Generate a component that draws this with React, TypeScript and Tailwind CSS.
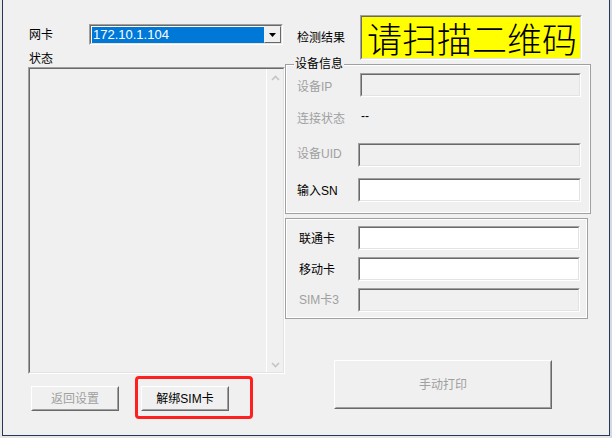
import React from "react";

function Field({ className, white }: { className: string; white?: boolean }) {
  return (
    <div className={`${className} border border-t-[#a0a0a0] border-l-[#a0a0a0] border-r-white border-b-white`}>
      <div
        className={`h-full w-full border border-t-[#696969] border-l-[#696969] border-r-[#e3e3e3] border-b-[#e3e3e3] ${
          white ? "bg-white" : "bg-[#f0f0f0]"
        }`}
      />
    </div>
  );
}

function Btn({ className, disabled, children }: { className: string; disabled?: boolean; children: React.ReactNode }) {
  return (
    <div className={`${className} border border-t-white border-l-white border-r-[#696969] border-b-[#696969] bg-[#f0f0f0]`}>
      <div
        className={`h-full w-full border border-t-[#f0f0f0] border-l-[#f0f0f0] border-r-[#a0a0a0] border-b-[#a0a0a0] flex items-center justify-center ${
          disabled ? "text-[#a0a0a0]" : "text-black"
        }`}
      >
        {children}
      </div>
    </div>
  );
}

function Row({
  label,
  gray,
  labelW,
  fieldW,
  white,
  className,
  labelShift,
}: {
  label: string;
  gray?: boolean;
  labelW: string;
  fieldW: string;
  white?: boolean;
  className?: string;
  labelShift?: string;
}) {
  return (
    <div className={`flex items-center h-[24px] ${className ?? ""}`}>
      <span className={`${labelW} ${labelShift ?? ""} leading-[14px] ${gray ? "text-[#a0a0a0]" : "text-black"}`}>
        {label}
      </span>
      <Field className={`${fieldW} h-[24px]`} white={white} />
    </div>
  );
}

export default function App() {
  return (
    <div className="relative w-[612px] h-[438px] overflow-hidden bg-[#e6e6e6] flex font-['Liberation_Sans','Noto_Sans_CJK_SC',sans-serif] text-[12px] text-black">
      <div className="w-[2px] h-full bg-[#e8e8e8]" />
      <div className="w-[608px] h-[436px] border-l border-r border-b border-[#22395a] bg-[#f0f0f0] flex">
        {/* left column */}
        <div className="ml-[25px] w-[257px] flex flex-col">
          <div className="mt-[24px] h-[21px] flex items-center">
            <span className="pl-[1px] w-[61px] pt-[1px] leading-[14px]">网卡</span>
            <div className="w-[194px] h-[21px] border border-t-[#a0a0a0] border-l-[#a0a0a0] border-r-white border-b-white">
              <div className="h-full w-full border border-t-[#696969] border-l-[#696969] border-r-[#e3e3e3] border-b-[#e3e3e3] bg-white flex pl-[1px] pt-[1px]">
                <div className="w-[172px] h-full bg-[#0078d7] text-white text-[13px] leading-[16px] pl-[1px]">
                  172.10.1.104
                </div>
                <div className="w-[17px] h-[17px] -mt-[1px] border border-t-[#f0f0f0] border-l-[#f0f0f0] border-r-[#696969] border-b-[#696969] bg-[#f0f0f0] flex items-center justify-center">
                  <svg width="7" height="4" viewBox="0 0 7 4">
                    <path d="M0 0H7L3.5 4Z" fill="#000" />
                  </svg>
                </div>
              </div>
            </div>
          </div>
          <div className="mt-[6px] h-[16px] leading-[16px] pl-[1px]">状态</div>
          <div className="w-[257px] h-[307px] border border-t-[#a0a0a0] border-l-[#a0a0a0] border-r-white border-b-white">
            <div className="h-full w-full border border-t-[#696969] border-l-[#696969] border-r-[#e3e3e3] border-b-[#e3e3e3] flex">
              <div className="flex-1" />
              <div className="w-[17px] h-full border-l border-white flex flex-col items-center justify-between pt-[6px] pb-[4px]">
                <svg width="9" height="6" viewBox="0 0 9 6">
                  <path d="M1 5L4.5 1.5L8 5" fill="none" stroke="#c4c4c4" strokeWidth="1.6" />
                </svg>
                <svg width="9" height="6" viewBox="0 0 9 6">
                  <path d="M1 1L4.5 4.5L8 1" fill="none" stroke="#c4c4c4" strokeWidth="1.6" />
                </svg>
              </div>
            </div>
          </div>
          <div className="mt-[12px] flex gap-[22px] pl-[3px]">
            <Btn className="w-[88px] h-[25px]" disabled>
              返回设置
            </Btn>
            <Btn className="w-[88px] h-[25px]">解绑SIM卡</Btn>
          </div>
        </div>

        {/* right column */}
        <div className="w-[306px] flex flex-col">
          <div className="mt-[15px] h-[45px] flex items-center">
            <span className="pl-[12px] w-[75px] pt-[1px] leading-[14px]">检测结果</span>
            <div className="w-[222px] h-[45px] border border-t-[#a0a0a0] border-l-[#a0a0a0] border-r-white border-b-white">
              <div className="h-full w-full border border-t-[#696969] border-l-[#696969] border-r-[#e3e3e3] border-b-[#e3e3e3] bg-[#ffff00] flex items-center pl-[5px] text-[35px] leading-[40px] font-['Noto_Sans_CJK_SC',sans-serif] font-light">
                请扫描二维码
              </div>
            </div>
          </div>

          <div className="relative mt-[4px] w-[306px] h-[150px] border border-[#a0a0a0]">
            <div className="h-full w-full border border-white pl-[10px] pt-[7px] flex flex-col">
              <Row label="设备IP" gray labelW="w-[63px]" fieldW="w-[221px]" labelShift="pt-[3px]" />
              <div className="mt-[9px] h-[24px] flex items-center">
                <span className="w-[64px] pt-[1px] leading-[14px] text-[#a0a0a0]">连接状态</span>
                <span className="leading-[14px] -mt-[5px]">--</span>
              </div>
              <Row label="设备UID" gray labelW="w-[61px]" fieldW="w-[223px]" className="mt-[13px]" labelShift="-mt-[3px]" />
              <Row label="输入SN" labelW="w-[61px]" fieldW="w-[223px]" white className="mt-[11px]" labelShift="pt-[1px]" />
            </div>
            <span className="absolute left-[8px] top-[-8px] bg-[#f0f0f0] px-[1px] leading-[14px]">设备信息</span>
          </div>

          <div className="mt-[4px] w-[303px] h-[101px] border border-[#a0a0a0]">
            <div className="h-full w-full border border-white pl-[12px] pt-[6px] flex flex-col gap-[7px]">
              <Row label="联通卡" labelW="w-[59px]" fieldW="w-[222px]" white labelShift="pt-[1px]" />
              <Row label="移动卡" labelW="w-[59px]" fieldW="w-[222px]" white labelShift="pt-[1px]" />
              <Row label="SIM卡3" gray labelW="w-[59px]" fieldW="w-[222px]" />
            </div>
          </div>

          <Btn className="mt-[41px] ml-[49px] w-[218px] h-[49px]" disabled>
            手动打印
          </Btn>
        </div>
      </div>
      <div className="flex-1 h-full bg-[#d5dae1]" />

      <div className="absolute left-[135px] top-[376px] w-[118px] h-[43px] border-[3px] border-[#ff1f1f] rounded-[4px]" />
    </div>
  );
}
